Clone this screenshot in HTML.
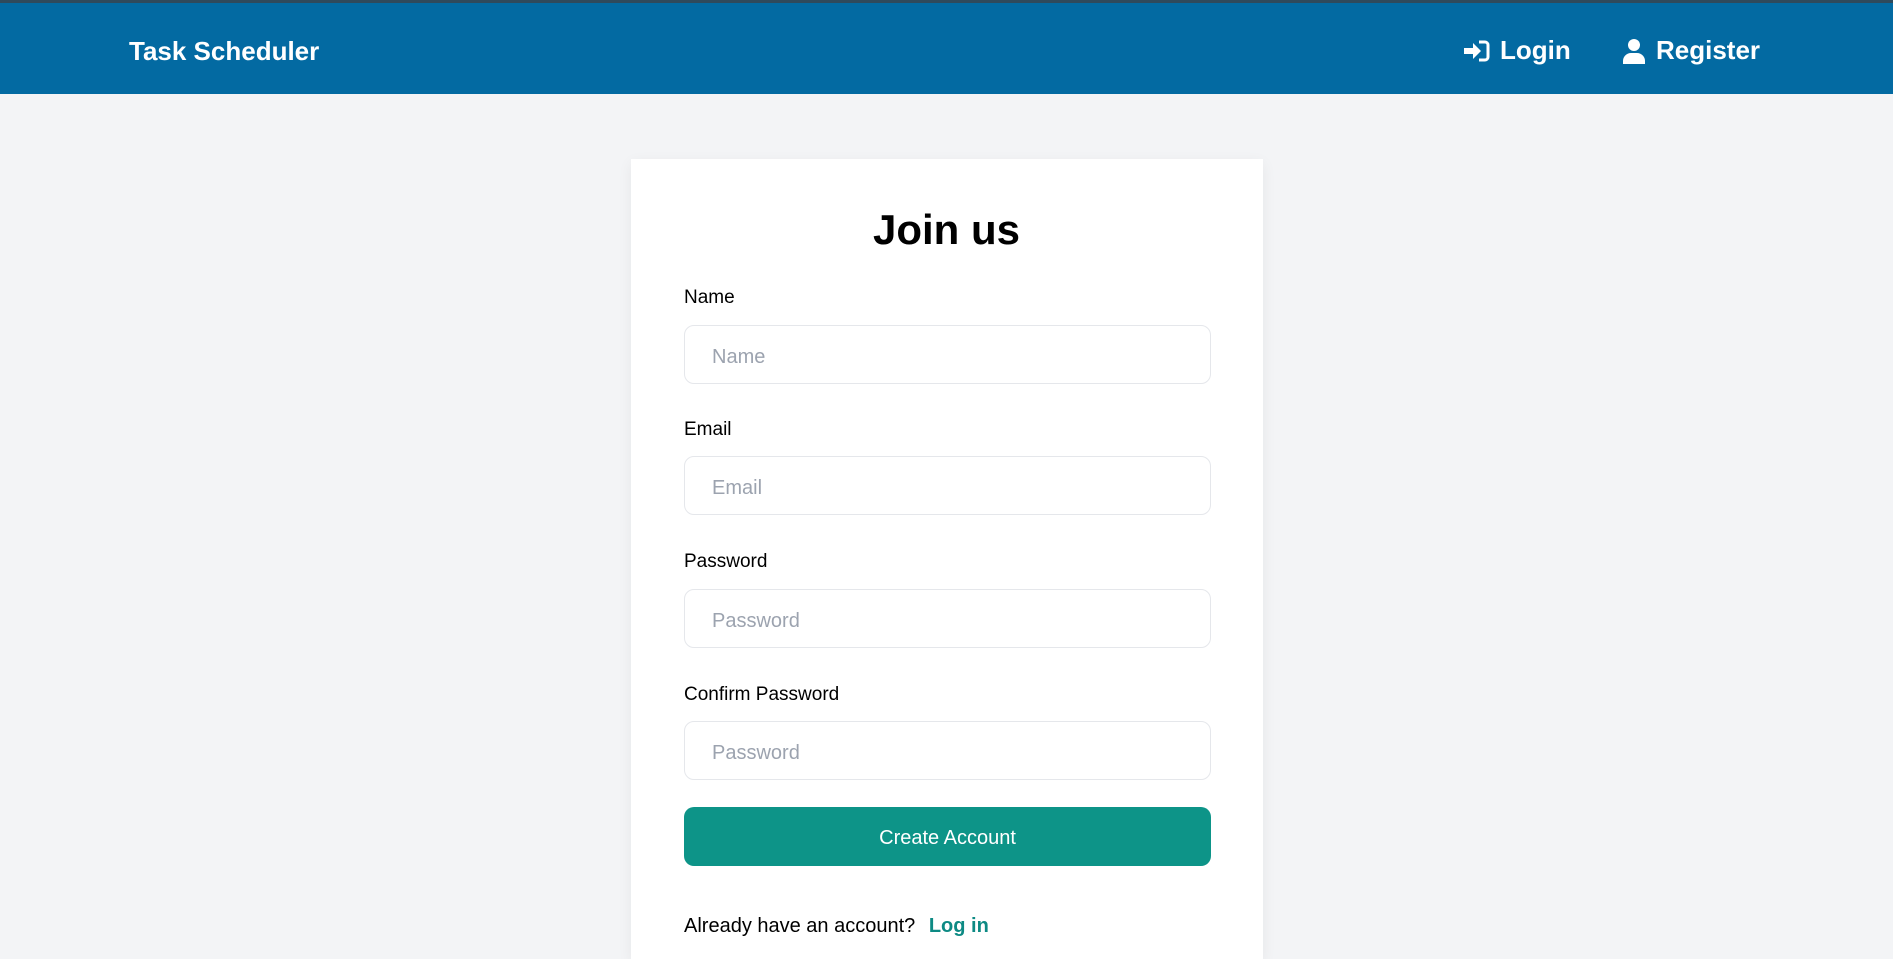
<!DOCTYPE html>
<html><head><meta charset="utf-8"><style>
*{box-sizing:border-box;margin:0;padding:0}
body{width:1893px;height:942px;overflow:hidden;background:#f3f4f6;font-family:"Liberation Sans",sans-serif;position:relative}
.nav{position:absolute;left:0;top:0;width:1893px;height:94px;background:#036aa2;border-top:3px solid #2f4a5c}
.brand{position:absolute;left:129px;top:33px;color:#fff;font-weight:bold;font-size:26px}
.nl{position:absolute;top:32px;color:#fff;font-weight:bold;font-size:26px;display:flex;align-items:center;gap:10px}
.card{position:absolute;left:631px;top:159px;width:632px;height:800px;background:#fff;box-shadow:0 4px 14px rgba(0,0,0,.06)}
h1{position:absolute;left:0;width:100%;top:206px;text-align:center;font-size:42px;font-weight:bold;color:#000}
.lbl{position:absolute;left:684px;font-size:19px;color:#000}
.inp{position:absolute;left:684px;width:527px;height:59px;border:1px solid #e5e7eb;border-radius:10px;background:#fff;padding-left:27px;padding-top:3px;line-height:57px;font-size:20px;color:#9ca3af}
.btn{position:absolute;left:684px;top:807px;width:527px;height:59px;border-radius:10px;background:#0d9488;color:#fff;text-align:center;line-height:63px;font-size:20px}
.foot{position:absolute;left:684px;top:915px;font-size:20px;color:#000}
.foot b{color:#0d8a84;margin-left:8px}
</style></head><body>
<div class="nav">
<div class="brand">Task Scheduler</div>
<div class="nl" style="left:1462px"><svg width="28" height="24" viewBox="0 0 28 24"><path d="M2 9h9V4l8 8-8 8v-5H2z" fill="#fff"/><path d="M17 3h6a3 3 0 0 1 3 3v12a3 3 0 0 1-3 3h-6" stroke="#fff" stroke-width="3" fill="none"/></svg>Login</div>
<div class="nl" style="left:1622px"><svg width="24" height="26" viewBox="0 0 24 26"><circle cx="12" cy="7" r="6" fill="#fff"/><path d="M1 26v-3a8 8 0 0 1 8-8h6a8 8 0 0 1 8 8v3z" fill="#fff"/></svg>Register</div>
</div>
<div class="card"></div>
<h1>Join us</h1>
<div class="lbl" style="top:287px">Name</div>
<div class="inp" style="top:325px">Name</div>
<div class="lbl" style="top:419px">Email</div>
<div class="inp" style="top:456px">Email</div>
<div class="lbl" style="top:551px">Password</div>
<div class="inp" style="top:589px">Password</div>
<div class="lbl" style="top:684px">Confirm Password</div>
<div class="inp" style="top:721px">Password</div>
<div class="btn">Create Account</div>
<div class="foot">Already have an account? <b>Log in</b></div>
</body></html>
